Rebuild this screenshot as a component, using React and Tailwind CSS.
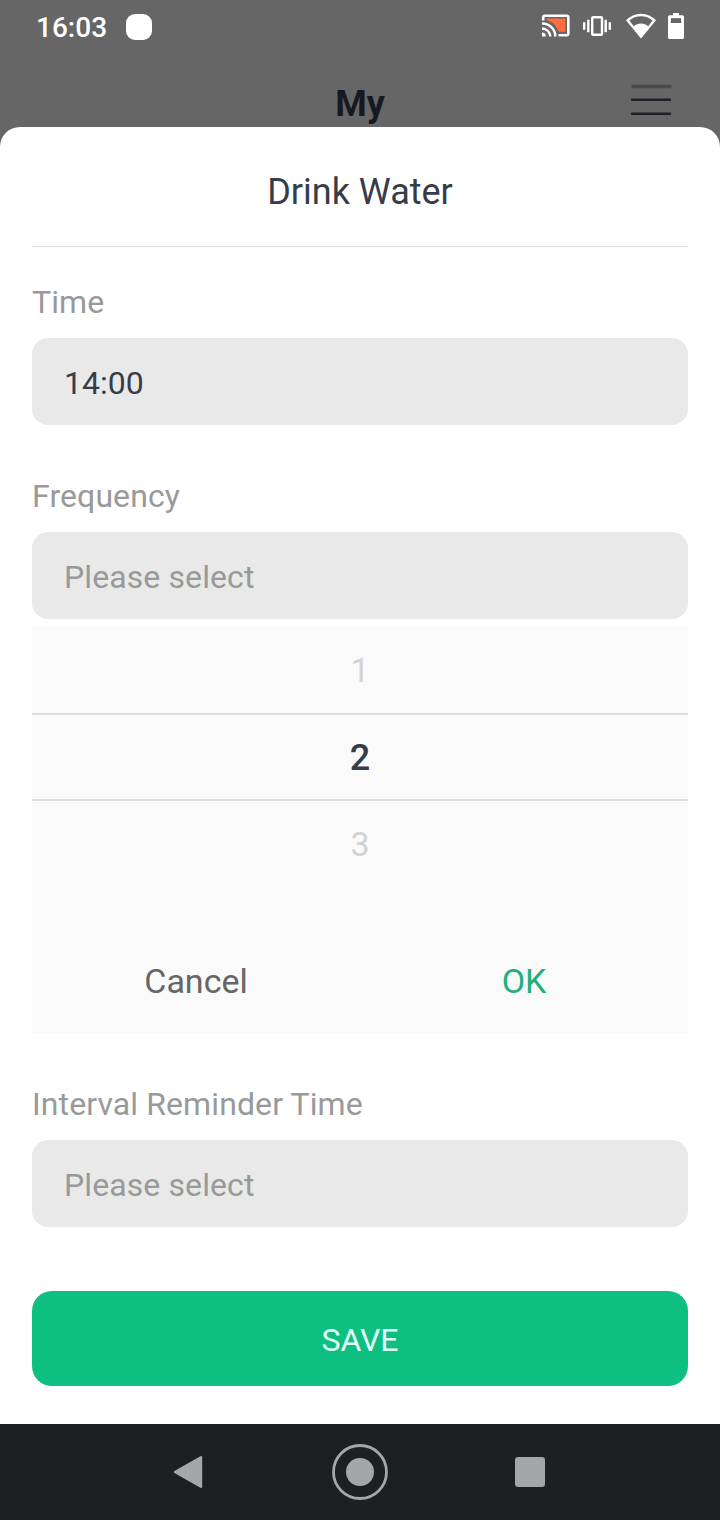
import React from 'react';

const frequencies = [
  { value: 1, row: 'h-[86px] pt-px text-[34px] text-[#d2d2d2]' },
  { value: 2, row: 'h-[88px] border-y-2 border-[#dddddd] pt-px text-[36px] font-medium text-[#363d4a]' },
  { value: 3, row: 'h-[86px] text-[34px] text-[#d2d2d2]' },
];

const CastIcon = () => (
  <svg width="29" height="24" viewBox="0 0 29 24" fill="none" stroke="#fff">
    <path d="M5.5 4.600h18.900v13.200h-6.600C16 12.400 12 7.800 5.500 6.300z" fill="#ff6e40" stroke="none" />
    <path d="M2.200 6.500V3.800Q2.200 1.700 3.800 1.700H25.600Q27.300 1.700 27.300 3.400V19.500Q27.300 21.200 25.600 21.200H17.500" strokeWidth="2.6" />
    <path d="M1 9.500A13 13 0 0 1 14.300 22.500M1 14.500A8.200 8.200 0 0 1 9.300 22.500" strokeWidth="2.4" />
    <path d="M1 18.600A3.900 3.900 0 0 1 4.900 22.500H1z" fill="#fff" stroke="none" />
  </svg>
);

const VibrateIcon = () => (
  <svg width="28" height="22" viewBox="0 0 28 22" fill="none" stroke="#fff" strokeWidth="2.4">
    <rect x="9.200" y="2.200" width="9.800" height="17.600" rx="1" />
    <path d="M1.200 7.200v7.600M5.300 4.800v12.400M22.700 4.800v12.400M26.800 7.200v7.600" />
  </svg>
);

const WifiIcon = () => (
  <svg width="30" height="26" viewBox="0 0 30 26">
    <path d="M15 25.500L0 7.200C4.200 3 9.300.7 15 .7s10.800 2.300 15 6.500z" fill="#fff" />
    <path d="M7.800 13.300L3.300 7.600C6.700 4.800 10.600 3.300 15 3.300s8.300 1.500 11.700 4.300l-4.500 5.700C20.200 11.500 17.700 10.500 15 10.500s-5.200 1-7.200 2.800z" fill="#666" />
  </svg>
);

const BatteryIcon = () => (
  <svg width="16" height="26" viewBox="0 0 16 26">
    <path d="M5 0h6v2.300h3.500Q16 2.300 16 3.800v20.700q0 1.500-1.500 1.500h-13Q0 26 0 24.500V3.800q0-1.500 1.500-1.500H5z" fill="#fff" />
    <path d="M2.900 5.200h10.200v4.800H2.900z" fill="#666" />
  </svg>
);

const StatusBar = () => (
  <div className="flex h-[52px] items-center pl-9 pr-9 text-white">
    <span className="pt-1 text-[28px] font-medium leading-none">16:03</span>
    <span className="ml-[19px] mt-px size-[26px] rounded-[9px] bg-white" />
    <div className="ml-auto flex items-center">
      <CastIcon />
      <div className="ml-[13px] mr-[15px]"><VibrateIcon /></div>
      <WifiIcon />
      <div className="ml-3"><BatteryIcon /></div>
    </div>
  </div>
);

const PageHeader = () => (
  <div className="grid h-[75px] grid-cols-[1fr_auto_1fr] items-start pt-8">
    <h1 className="col-start-2 text-[36px] font-bold leading-[40px] text-[#161922]">My</h1>
    <svg className="mr-[48px] justify-self-end" width="42" height="34" viewBox="0 0 42 34">
      <path d="M3 2.500h37" stroke="#494a4f" strokeWidth="3.500" strokeLinecap="round" />
      <path d="M2 15.800h38M2 29.800h38" stroke="#1d2029" strokeWidth="2.400" strokeLinecap="round" />
    </svg>
  </div>
);

const Field = ({ label, value, placeholder }) => (
  <div>
    <p className="text-[32px] leading-[40px] tracking-[0.1px] text-[#999999]">{label}</p>
    <div className="mt-4 flex h-[87px] items-center rounded-2xl bg-[#e9e9e9] px-8 pt-[3px] text-[32px]">
      {value ? (
        <span className="text-[#363d4a]">{value}</span>
      ) : (
        <span className="tracking-[0.1px] text-[#999999]">{placeholder}</span>
      )}
    </div>
  </div>
);

const FrequencyPicker = () => (
  <div className="mt-2 h-[406px] bg-[#fafafa]">
    {frequencies.map((item) => (
      <div key={item.value} className={`flex items-center justify-center ${item.row}`}>
        {item.value}
      </div>
    ))}
    <div className="mt-[42px] grid h-[104px] grid-cols-2 text-[34px]">
      <button className="text-[#666666]">Cancel</button>
      <button className="text-[#20b07c]">OK</button>
    </div>
  </div>
);

const NavigationBar = () => (
  <nav className="flex h-24 items-center bg-[#1c2021] pl-[173px]">
    <svg width="30" height="34" viewBox="0 0 30 34">
      <path d="M2 17L28 2.200v29.600z" fill="#a5a6a8" stroke="#a5a6a8" strokeWidth="2.400" strokeLinejoin="round" />
    </svg>
    <svg className="ml-[129px]" width="56" height="56" viewBox="0 0 56 56">
      <circle cx="28" cy="28" r="26.500" fill="none" stroke="#a5a6a8" strokeWidth="2.800" />
      <circle cx="28" cy="28" r="14" fill="#a5a6a8" />
    </svg>
    <span className="ml-[127px] size-[30px] rounded-[3px] bg-[#a5a6a8]" />
  </nav>
);

export default function App() {
  return (
    <div className="flex h-[1520px] w-[720px] flex-col overflow-hidden bg-[#666666] font-['Roboto',sans-serif]">
      <StatusBar />
      <PageHeader />
      <main className="flex-1 rounded-t-[20px] bg-white px-8">
        <h2 className="h-[120px] border-b border-[#dddddd] pt-[41px] text-center text-[36px] leading-[48px] text-[#363d4a]">
          Drink Water
        </h2>
        <div className="mt-[35px]">
          <Field label="Time" value="14:00" />
        </div>
        <div className="mt-[51px]">
          <Field label="Frequency" placeholder="Please select" />
          <FrequencyPicker />
        </div>
        <div className="mt-[51px]">
          <Field label="Interval Reminder Time" placeholder="Please select" />
        </div>
        <button className="mt-16 h-[95px] w-full rounded-[20px] bg-[#0dbf80] pt-[3px] text-[32px] text-[#e2fff7]">
          SAVE
        </button>
      </main>
      <NavigationBar />
    </div>
  );
}
